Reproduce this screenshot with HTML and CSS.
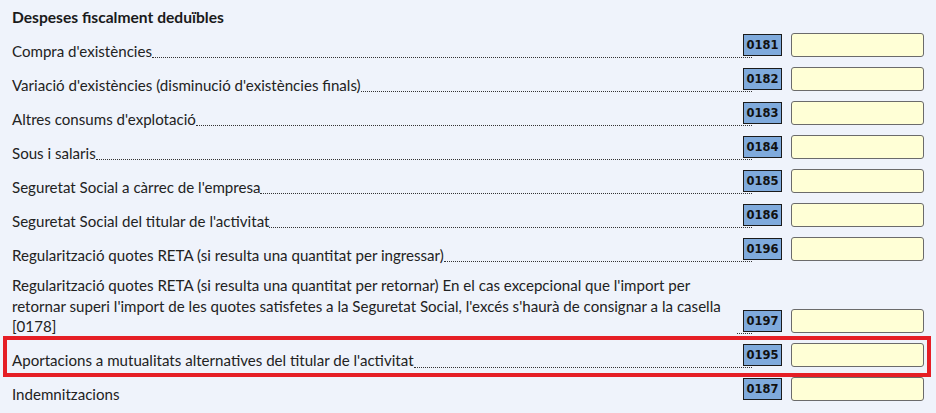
FILE: index.html
```html
<!DOCTYPE html>
<html lang="ca">
<head>
<meta charset="utf-8">
<title>Despeses fiscalment deduïbles</title>
<link rel="stylesheet" href="styles.css">
</head>
<body>
<div class="section">
  <h3 class="section-title">Despeses fiscalment deduïbles</h3>

  <div class="row">
    <div class="label"><span class="text">Compra d'existències</span><span class="fill"></span></div>
    <span class="code">0181</span><input class="amount" type="text">
  </div>
  <div class="row">
    <div class="label"><span class="text">Variació d'existències (disminució d'existències finals)</span><span class="fill"></span></div>
    <span class="code">0182</span><input class="amount" type="text">
  </div>
  <div class="row">
    <div class="label"><span class="text">Altres consums d'explotació</span><span class="fill"></span></div>
    <span class="code">0183</span><input class="amount" type="text">
  </div>
  <div class="row">
    <div class="label"><span class="text">Sous i salaris</span><span class="fill"></span></div>
    <span class="code">0184</span><input class="amount" type="text">
  </div>
  <div class="row">
    <div class="label"><span class="text">Seguretat Social a càrrec de l'empresa</span><span class="fill"></span></div>
    <span class="code">0185</span><input class="amount" type="text">
  </div>
  <div class="row">
    <div class="label"><span class="text">Seguretat Social del titular de l'activitat</span><span class="fill"></span></div>
    <span class="code">0186</span><input class="amount" type="text">
  </div>
  <div class="row">
    <div class="label"><span class="text">Regularització quotes RETA (si resulta una quantitat per ingressar)</span><span class="fill"></span></div>
    <span class="code">0196</span><input class="amount" type="text">
  </div>
  <div class="row">
    <div class="label"><span class="text">Regularització quotes RETA (si resulta una quantitat per retornar) En el cas excepcional que l'import per retornar superi l'import de les quotes satisfetes a la Seguretat Social, l'excés s'haurà de consignar a la casella [0178]</span><span class="fill"></span></div>
    <span class="code">0197</span><input class="amount" type="text">
  </div>
  <div class="row highlight">
    <div class="label"><span class="text">Aportacions a mutualitats alternatives del titular de l'activitat</span><span class="fill"></span></div>
    <span class="code">0195</span><input class="amount" type="text">
  </div>
  <div class="row">
    <div class="label"><span class="text">Indemnitzacions</span><span class="fill"></span></div>
    <span class="code">0187</span><input class="amount" type="text">
  </div>
</div>
</body>
</html>
```
FILE: styles.css
```css
html, body {
  margin: 0;
  padding: 0;
  background: #eff3fb;
}

body {
  font-family: Lato, "Liberation Sans", sans-serif;
  color: #222;
  overflow: hidden;
}

.section {
  padding: 0 12px;
}

.section-title {
  margin: 0 0 -4px;
  padding-top: 7px;
  font-size: 15.6px;
  line-height: 20px;
  font-weight: 700;
  color: #1a1a1a;
}

.row {
  position: relative;
  display: flex;
  align-items: flex-end;
  margin-top: 10px;
}

.label {
  flex: 1;
  display: flex;
  align-items: flex-end;
  min-width: 0;
  padding-top: 4px;
}

.text {
  font-size: 15.1px;
  line-height: 20.5px;
  margin-bottom: -4px;
}

.fill {
  flex: 1;
  min-width: 15px;
  border-bottom: 1px dotted #333;
  margin-bottom: -1px;
}

.code {
  margin-left: -9px;
  width: 37px;
  height: 20px;
  margin-bottom: 1px;
  background: #7faadc;
  border: 1px solid #1b1b1b;
  font-family: "DejaVu Sans", sans-serif;
  font-weight: 700;
  font-size: 11.5px;
  line-height: 21px;
  text-align: center;
  color: #111;
}

.amount {
  box-sizing: border-box;
  margin: 0 0 0 9px;
  width: 133px;
  height: 24px;
  background: #ffffd6;
  border: 1px solid #6b6b6b;
  border-radius: 3px;
  padding: 0 4px;
}

.highlight::after {
  content: "";
  position: absolute;
  left: -9px;
  right: -7px;
  top: -7px;
  bottom: -10px;
  border: 4px solid #e51e25;
  pointer-events: none;
}
```
